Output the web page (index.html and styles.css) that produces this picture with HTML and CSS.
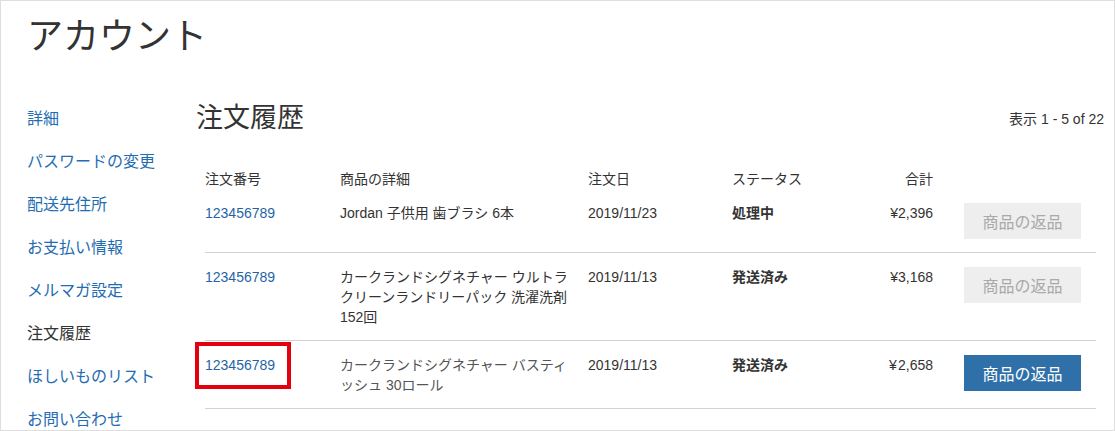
FILE: index.html
```html
<!DOCTYPE html>
<html lang="ja">
<head>
<meta charset="utf-8">
<title>アカウント</title>
<link rel="stylesheet" href="styles.css">
</head>
<body>
<div class="frame">
  <h1 class="page-title">アカウント</h1>
  <div class="layout">
    <nav class="sidebar">
      <a class="nav-link" href="#">詳細</a>
      <a class="nav-link" href="#">パスワードの変更</a>
      <a class="nav-link" href="#">配送先住所</a>
      <a class="nav-link" href="#">お支払い情報</a>
      <a class="nav-link" href="#">メルマガ設定</a>
      <span class="nav-link current">注文履歴</span>
      <a class="nav-link" href="#">ほしいものリスト</a>
      <a class="nav-link" href="#">お問い合わせ</a>
    </nav>
    <main class="main">
      <div class="main-head">
        <h2 class="section-title">注文履歴</h2>
        <div class="count">表示 1 - 5 of 22</div>
      </div>
      <div class="orders">
        <div class="row head">
          <div>注文番号</div>
          <div>商品の詳細</div>
          <div>注文日</div>
          <div>ステータス</div>
          <div class="price">合計</div>
          <div></div>
        </div>
        <div class="row item first">
          <div><a class="order-no" href="#">123456789</a></div>
          <div class="product">Jordan 子供用 歯ブラシ 6本</div>
          <div>2019/11/23</div>
          <div class="status">処理中</div>
          <div class="price">¥2,396</div>
          <div class="action"><button class="btn disabled" type="button">商品の返品</button></div>
        </div>
        <div class="row item">
          <div><a class="order-no" href="#">123456789</a></div>
          <div class="product">カークランドシグネチャー ウルトラクリーンランドリーパック 洗濯洗剤 152回</div>
          <div>2019/11/13</div>
          <div class="status">発送済み</div>
          <div class="price">¥3,168</div>
          <div class="action"><button class="btn disabled" type="button">商品の返品</button></div>
        </div>
        <div class="row item">
          <div class="marked"><a class="order-no" href="#">123456789</a><span class="highlight"></span></div>
          <div class="product muted">カークランドシグネチャー バスティッシュ 30ロール</div>
          <div>2019/11/13</div>
          <div class="status">発送済み</div>
          <div class="price">¥&#8202;2,658</div>
          <div class="action"><button class="btn primary" type="button">商品の返品</button></div>
        </div>
      </div>
    </main>
  </div>
</div>
</body>
</html>
```
FILE: styles.css
```css
* { box-sizing: border-box; }
html, body { margin: 0; padding: 0; }
body {
  font-family: "Liberation Sans", "Noto Sans CJK JP", sans-serif;
  color: #333;
  background: #fff;
}
.frame {
  width: 1115px;
  height: 431px;
  border: 1px solid #dedede;
  overflow: hidden;
}
.page-title {
  margin: 14px 0 0 0;
  padding-left: 26px;
  font-size: 36px;
  line-height: 44px;
  font-weight: normal;
  color: #333;
}
.layout {
  display: flex;
  margin-top: 38px;
}
.sidebar {
  width: 195px;
  flex: none;
  padding-left: 26px;
  display: flex;
  flex-direction: column;
}
.nav-link {
  display: block;
  font-size: 16px;
  line-height: 43px;
  height: 43px;
  color: #1f6db3;
  text-decoration: none;
  white-space: nowrap;
}
.nav-link.current { color: #333; }
.main {
  flex: 1;
  padding-right: 10px;
}
.main-head {
  display: flex;
  justify-content: space-between;
  align-items: center;
  height: 42px;
}
.section-title {
  margin: 0;
  font-size: 27px;
  line-height: 42px;
  font-weight: normal;
  color: #333;
}
.count {
  font-size: 14px;
  color: #333;
}
.orders {
  margin: 30px 8px 0 9px;
}
.row {
  display: grid;
  grid-template-columns: 135px 248px 144px 120px 81px 1fr;
  font-size: 14px;
  line-height: 20px;
  align-items: start;
}
.row.head { margin-bottom: 14px; }
.row.item {
  padding: 14px 0 13px;
  border-bottom: 1px solid #d2d2d2;
}
.row.item.first { padding-top: 0; }
.product { padding-right: 12px; }
.product.muted { color: #555; }
.price { text-align: right; }
.status { font-weight: bold; }
.order-no {
  color: #1f64a6;
  text-decoration: none;
}
.action {
  display: flex;
  justify-content: flex-end;
  padding-right: 15px;
}
.btn {
  width: 117px;
  height: 36px;
  border: none;
  font-family: "Liberation Sans", "Noto Sans CJK JP", sans-serif;
  font-size: 16px;
  padding: 0;
  cursor: pointer;
}
.btn.disabled {
  background: #eeeeee;
  color: #a9a9a9;
}
.btn.primary {
  background: #2f70a8;
  color: #fff;
}
.marked { position: relative; }
.highlight {
  position: absolute;
  left: -10px;
  top: -13px;
  width: 96px;
  height: 47px;
  border: 4px solid #e3000f;
}
```
